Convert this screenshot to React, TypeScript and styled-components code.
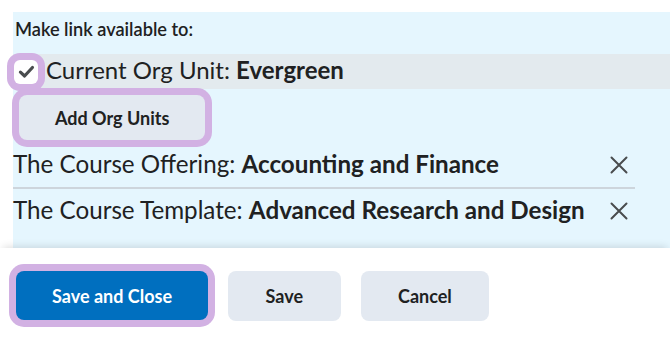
import styled, { createGlobalStyle } from 'styled-components';

const GlobalStyle = createGlobalStyle`
  html, body {
    margin: 0;
    background: #ffffff;
  }
  body {
    font-family: Lato, 'Noto Sans', sans-serif;
    color: #202122;
  }
`;

const ringColor = '#d2b1e3';

const Page = styled.div`
  width: 670px;
  height: 341px;
  overflow: hidden;
  display: flex;
  flex-direction: column;
  padding-top: 12px;
  box-sizing: border-box;
`;

const Panel = styled.section`
  margin-left: 13px;
  padding: 7px 0 13px;
  background: #e5f6fe;
  display: flex;
  flex-direction: column;
  align-items: flex-start;
`;

const Heading = styled.div`
  margin-left: 2px;
  font-size: 18.2px;
  font-weight: 600;
  line-height: 20px;
`;

const CurrentRow = styled.label`
  align-self: stretch;
  margin-top: 15px;
  height: 35px;
  display: flex;
  align-items: center;
  gap: 8px;
  background: #e3eaee;
  font-size: 24px;
`;

const RowText = styled.span`
  line-height: 27px;
  padding-bottom: 5px;
  white-space: nowrap;
`;

const Checkbox = styled.span`
  margin-left: 1px;
  width: 24px;
  height: 24px;
  flex: none;
  display: flex;
  align-items: center;
  justify-content: center;
  background: #ffffff;
  border-radius: 6px;
  box-shadow: 0 0 0 7px ${ringColor};
  color: #494c4e;
`;

const Button = styled.button<{ $primary?: boolean; $ring?: boolean; $height: number; $pad?: number }>`
  height: ${(p) => p.$height}px;
  padding: 0 ${(p) => p.$pad ?? 36}px;
  border: none;
  border-radius: 8px;
  font-family: Lato, 'Noto Sans', sans-serif;
  font-size: 18px;
  font-weight: 700;
  white-space: nowrap;
  background: ${(p) => (p.$primary ? '#006fbf' : '#e3e9f1')};
  color: ${(p) => (p.$primary ? '#ffffff' : '#202122')};
  box-shadow: ${(p) => (p.$ring ? `0 0 0 7px ${ringColor}` : 'none')};
  cursor: pointer;
`;

const AddButton = styled(Button)`
  margin: 6px 0 0 6px;
`;

const OrgList = styled.div`
  margin-top: 3px;
  width: 622px;
  display: flex;
  flex-direction: column;
`;

const OrgRow = styled.div<{ $divider?: boolean }>`
  height: 44px;
  display: flex;
  align-items: center;
  justify-content: space-between;
  padding-right: 7px;
  font-size: 24.2px;
  border-bottom: 2px solid ${(p) => (p.$divider ? '#cdd5dc' : 'transparent')};
`;

const OrgText = styled.span`
  line-height: 42px;
  padding-bottom: 2px;
  white-space: nowrap;
`;

const RemoveButton = styled.button`
  width: 18px;
  height: 18px;
  padding: 0;
  border: none;
  background: none;
  color: #494c4e;
  display: flex;
  cursor: pointer;
`;

const Footer = styled.footer`
  flex: 1;
  position: relative;
  background: #ffffff;
  padding: 23px 0 0 16px;
  display: flex;
  align-items: flex-start;
  gap: 20px;
  box-shadow: 0 -4px 8px -3px rgba(0, 0, 0, 0.14);
`;

const CheckIcon = () => (
  <svg width="17" height="17" viewBox="0 0 16 16" fill="none">
    <path d="M2.3 8.6 L6.2 12.2 L13.6 4.2" stroke="currentColor" strokeWidth="3" strokeLinecap="round" strokeLinejoin="round" />
  </svg>
);

const CloseIcon = () => (
  <svg width="18" height="18" viewBox="0 0 18 18" fill="none">
    <path d="M1.5 1.5 L16.5 16.5 M16.5 1.5 L1.5 16.5" stroke="currentColor" strokeWidth="2" strokeLinecap="round" />
  </svg>
);

const orgs = [
  { id: 1, kind: 'The Course Offering', name: 'Accounting and Finance' },
  { id: 2, kind: 'The Course Template', name: 'Advanced Research and Design' },
];

const App = () => {
  return (
    <>
      <GlobalStyle />
      <Page>
        <Panel>
          <Heading>Make link available to:</Heading>
          <CurrentRow>
            <Checkbox>
              <CheckIcon />
            </Checkbox>
            <RowText>
              Current Org Unit: <b>Evergreen</b>
            </RowText>
          </CurrentRow>
          <AddButton $ring $height={45}>
            Add Org Units
          </AddButton>
          <OrgList>
            {orgs.map((org, i) => (
              <OrgRow key={org.id} $divider={i < orgs.length - 1}>
                <OrgText>
                  {org.kind}: <b>{org.name}</b>
                </OrgText>
                <RemoveButton aria-label={`Remove ${org.name}`}>
                  <CloseIcon />
                </RemoveButton>
              </OrgRow>
            ))}
          </OrgList>
        </Panel>
        <Footer>
          <Button $primary $ring $height={49}>
            Save and Close
          </Button>
          <Button $height={50} $pad={37.5}>
            Save
          </Button>
          <Button $height={50} $pad={37.5}>
            Cancel
          </Button>
        </Footer>
      </Page>
    </>
  );
};

export default App;
